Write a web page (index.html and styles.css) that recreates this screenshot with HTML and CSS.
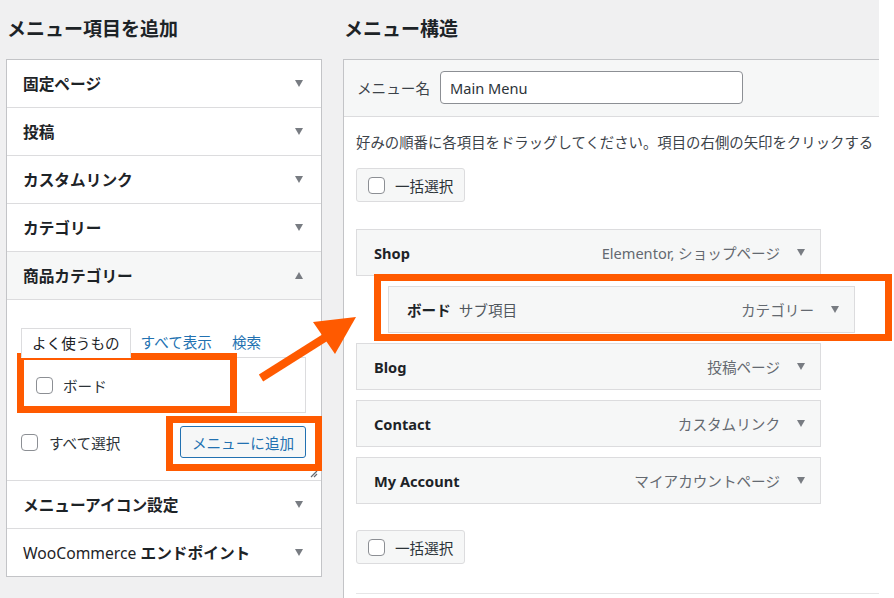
FILE: index.html
```html
<!DOCTYPE html>
<html lang="ja">
<head>
<meta charset="utf-8">
<title>メニュー</title>
<link rel="stylesheet" href="styles.css">
</head>
<body>
<div class="page">
  <div class="screen">
    <section class="col-left">
      <h2 class="col-title">メニュー項目を追加</h2>
      <div class="accordion">
        <div class="acc-row"><span>固定ページ</span><span class="tri-down"></span></div>
        <div class="acc-row"><span>投稿</span><span class="tri-down"></span></div>
        <div class="acc-row"><span>カスタムリンク</span><span class="tri-down"></span></div>
        <div class="acc-row"><span>カテゴリー</span><span class="tri-down"></span></div>
        <div class="acc-row open"><span>商品カテゴリー</span><span class="tri-up"></span></div>
        <div class="acc-content">
          <div class="tabs">
            <span class="tab active">よく使うもの</span>
            <span class="tab">すべて表示</span>
            <span class="tab">検索</span>
          </div>
          <div class="tab-panel">
            <label class="check"><span class="cb"></span>ボード</label>
          </div>
          <div class="acc-actions">
            <label class="check"><span class="cb"></span>すべて選択</label>
            <button class="btn-add">メニューに追加</button>
          </div>
          <svg class="resize" width="10" height="10" viewBox="0 0 10 10"><path d="M9 3 L3 9 M9 6 L6 9" stroke="#646970" stroke-width="1.2" fill="none"/></svg>
        </div>
        <div class="acc-row"><span>メニューアイコン設定</span><span class="tri-down"></span></div>
        <div class="acc-row last"><span><span class="latin">WooCommerce</span> エンドポイント</span><span class="tri-down"></span></div>
      </div>
    </section>
    <section class="col-right">
      <h2 class="col-title">メニュー構造</h2>
      <div class="menu-box">
        <div class="menu-head">
          <label class="menu-label">メニュー名</label>
          <input class="menu-name" type="text" value="Main Menu">
        </div>
        <div class="menu-body">
          <p class="desc">好みの順番に各項目をドラッグしてください。項目の右側の矢印をクリックする</p>
          <div class="bulk"><span class="cb"></span>一括選択</div>
          <ul class="items">
            <li class="item"><span class="item-title">Shop</span><span class="item-type">Elementor, ショップページ</span><span class="tri-down"></span></li>
            <li class="item sub"><span class="item-title">ボード</span><span class="item-note">サブ項目</span><span class="item-type">カテゴリー</span><span class="tri-down"></span></li>
            <li class="item"><span class="item-title">Blog</span><span class="item-type">投稿ページ</span><span class="tri-down"></span></li>
            <li class="item"><span class="item-title">Contact</span><span class="item-type">カスタムリンク</span><span class="tri-down"></span></li>
            <li class="item"><span class="item-title">My Account</span><span class="item-type">マイアカウントページ</span><span class="tri-down"></span></li>
          </ul>
          <div class="bulk bulk-bottom"><span class="cb"></span>一括選択</div>
          <div class="menu-foot"></div>
        </div>
      </div>
    </section>
  </div>
  <div class="mark mark-item"></div>
  <div class="mark mark-add"></div>
  <div class="mark mark-sub"></div>
  <svg class="arrow" width="894" height="598" viewBox="0 0 894 598">
    <line x1="261" y1="378" x2="326" y2="337" stroke="#ff5a00" stroke-width="8"/>
    <polygon points="356,317 313,322 335,354" fill="#ff5a00"/>
  </svg>
</div>
</body>
</html>
```
FILE: styles.css
```css
* { box-sizing: border-box; margin: 0; padding: 0; }
html, body { width: 894px; height: 598px; overflow: hidden; background: #fff; }
body {
  font-family: "Noto Sans", "Noto Sans CJK JP", sans-serif;
  color: #1d2327;
  font-size: 14.6px;
}
.page { position: relative; width: 894px; height: 598px; }
.screen {
  width: 879px;
  height: 598px;
  background: #f0f0f1;
  display: flex;
  gap: 21px;
  padding-left: 6px;
  overflow: hidden;
}
.col-left { width: 316px; flex: none; }
.col-right { width: 536px; flex: none; }
.col-title {
  height: 59px;
  line-height: 59px;
  font-size: 19px;
  font-weight: 700;
  padding-left: 1px;
  white-space: nowrap;
}

/* accordion */
.accordion { background: #fff; border: 1px solid #c3c4c7; }
.acc-row {
  height: 48px;
  border-bottom: 1px solid #dcdcde;
  display: flex;
  align-items: center;
  justify-content: space-between;
  padding: 0 18px 0 16px;
  font-weight: 700;
  font-size: 15.7px;
}
.acc-row.last { border-bottom: 0; height: 47px; }
.acc-row.open { background: #f6f7f7; }
.latin { font-weight: 400; }
.tri-down {
  width: 0; height: 0;
  border-left: 4.5px solid transparent;
  border-right: 4.5px solid transparent;
  border-top: 7px solid #787c82;
  flex: none;
}
.tri-up {
  width: 0; height: 0;
  border-left: 4.5px solid transparent;
  border-right: 4.5px solid transparent;
  border-bottom: 7px solid #787c82;
  flex: none;
}
.acc-content {
  position: relative;
  height: 181px;
  border-bottom: 1px solid #dcdcde;
  padding: 28px 15px 0 14px;
}
.tabs { display: flex; align-items: flex-end; height: 29px; }
.tab {
  padding: 0 10px;
  height: 29px;
  line-height: 28px;
  color: #2271b1;
}
.tab.active {
  height: 30px;
  margin-bottom: -1px;
  border: 1px solid #dcdcde;
  border-bottom-color: #fff;
  background: #fff;
  color: #1d2327;
  position: relative;
  z-index: 1;
}
.tab-panel {
  height: 56px;
  border: 1px solid #dcdcde;
  display: flex;
  align-items: center;
  padding-left: 14px;
}
.check { display: flex; align-items: center; gap: 10px; color: #2c3338; }
.cb {
  width: 17px; height: 17px;
  border: 1px solid #8c8f94;
  border-radius: 4px;
  background: #fff;
  flex: none;
}
.acc-actions {
  margin-top: 13px;
  display: flex;
  align-items: center;
  justify-content: space-between;
}
.acc-actions .check { gap: 11px; }
.btn-add {
  width: 126px;
  height: 32px;
  border: 1px solid #2271b1;
  border-radius: 3px;
  background: #f6f7f7;
  color: #2271b1;
  font-family: inherit;
  font-size: 14.6px;
}
.resize { position: absolute; right: 3px; bottom: 2px; }

/* right box */
.menu-box {
  background: #fff;
  border: 1px solid #c3c4c7;
  border-right: 0;
  height: 600px;
}
.menu-head {
  background: #f6f7f7;
  border-bottom: 1px solid #dcdcde;
  padding: 11px 13px 12px;
  display: flex;
  align-items: center;
  gap: 10px;
}
.menu-label { color: #3c434a; white-space: nowrap; }
.menu-name {
  width: 303px;
  height: 33px;
  border: 1px solid #8c8f94;
  border-radius: 4px;
  padding: 0 9px;
  font-family: inherit;
  font-size: 14.6px;
  color: #2c3338;
  background: #fff;
}
.menu-body { padding-left: 12px; }
.desc {
  margin-top: 16px;
  line-height: 20px;
  white-space: nowrap;
  color: #3c434a;
  font-size: 14.4px;
}
.bulk {
  margin-top: 15px;
  display: inline-flex;
  align-items: center;
  gap: 10px;
  height: 34px;
  padding: 0 11px;
  border: 1px solid #dcdcde;
  border-radius: 3px;
  background: #f6f7f7;
  color: #2c3338;
}
.items { list-style: none; margin-top: 27px; }
.item {
  width: 465px;
  height: 47px;
  margin-bottom: 10px;
  border: 1px solid #dcdcde;
  background: #f6f7f7;
  display: flex;
  align-items: center;
  padding: 0 15px 0 17px;
}
.item:last-child { margin-bottom: 0; }
.item.sub { margin-left: 32px; width: 467px; padding-left: 18px; }
.item-title { font-weight: 700; }
.item-note { color: #50575e; margin-left: 8px; }
.item-type { margin-left: auto; margin-right: 17px; color: #646970; white-space: nowrap; }
.bulk-bottom { margin-top: 26px; }
.menu-foot { margin-top: 29px; border-top: 1px solid #e6e6e7; height: 10px; }

/* annotations */
.mark { position: absolute; border: 7px solid #ff5a00; }
.mark-item { left: 17px; top: 353px; width: 220px; height: 60px; }
.mark-add { left: 166px; top: 416px; width: 156px; height: 55px; }
.mark-sub { left: 374px; top: 274px; width: 518px; height: 67px; }
.arrow { position: absolute; left: 0; top: 0; pointer-events: none; }
```
